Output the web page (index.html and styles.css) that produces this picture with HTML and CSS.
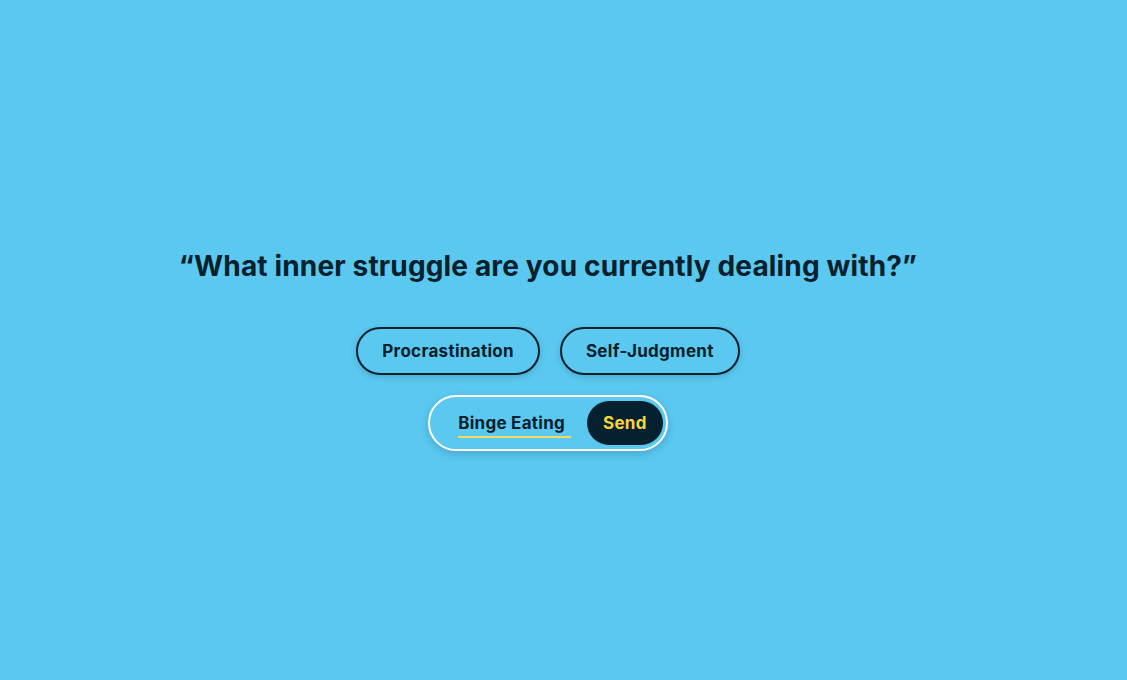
FILE: index.html
```html
<!DOCTYPE html>
<html>
<head>
<meta charset="utf-8">
<link rel="stylesheet" href="styles.css">
</head>
<body>
<main class="stage">
  <h1 class="question">“What inner struggle are you currently dealing with?”</h1>
  <div class="chips">
    <button class="chip">Procrastination</button>
    <button class="chip">Self-Judgment</button>
  </div>
  <form class="answer">
    <span class="answer-text">Binge Eating</span>
    <button class="send" type="button">Send</button>
  </form>
</main>
</body>
</html>
```
FILE: styles.css
```css
* { box-sizing: border-box; }
html, body { margin: 0; height: 100%; }
body {
  background: #5bc8f0;
  font-family: Inter, "Noto Sans", sans-serif;
  color: #06202c;
}
.stage {
  height: 680px;
  display: flex;
  flex-direction: column;
  align-items: center;
  justify-content: center;
  padding: 20px 31px 0 0;
}
.question {
  margin: 0;
  font-size: 28px;
  font-weight: 700;
  line-height: 34px;
  letter-spacing: 0.15px;
}
.chips {
  display: flex;
  gap: 20px;
  margin-top: 44px;
}
.chip {
  height: 48px;
  padding: 0 24px;
  border: 2px solid #06202c;
  border-radius: 24px;
  background: transparent;
  font-family: inherit;
  font-size: 17px;
  font-weight: 700;
  letter-spacing: 0.3px;
  color: #06202c;
  box-shadow: 0 2px 6px rgba(0, 40, 70, 0.18);
}
.answer {
  margin: 20px 0 0;
  height: 56px;
  display: flex;
  align-items: center;
  gap: 16px;
  padding: 0 3px 0 28px;
  border: 2px solid #ffffff;
  border-radius: 28px;
  box-shadow: 0 3px 8px rgba(0, 40, 70, 0.2);
}
.answer-text {
  font-size: 17px;
  font-weight: 700;
  letter-spacing: 0.25px;
  line-height: 22px;
  padding: 0 6px 2px 0;
  border-bottom: 2px solid #f4dc63;
  margin-top: 4px;
}
.send {
  height: 44px;
  padding: 0 16px;
  border: none;
  border-radius: 22px;
  background: #052130;
  color: #f6d43a;
  font-family: inherit;
  font-size: 17px;
  font-weight: 700;
  letter-spacing: 0.3px;
}
```
